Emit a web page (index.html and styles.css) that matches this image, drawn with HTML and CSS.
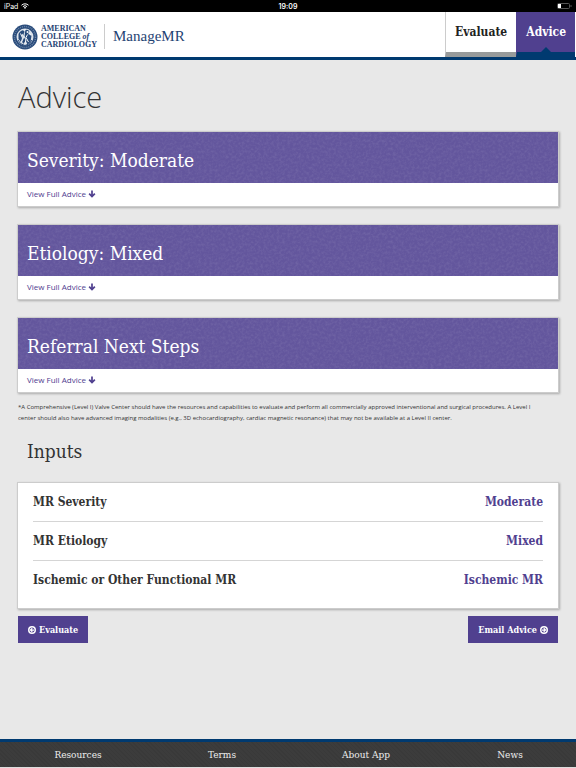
FILE: index.html
```html
<!DOCTYPE html>
<html lang="en">
<head>
    <meta charset="UTF-8">
    <meta name="viewport" content="width=device-width, initial-scale=1.0">
    <title>ManageMR</title>
    <link rel="stylesheet" href="styles.css">
</head>
<body>
    <div class="status-bar">
        <span class="device">iPad
            <svg class="wifi" viewBox="0 0 16 12" aria-hidden="true">
                <path d="M1 4.5a10 10 0 0 1 14 0M3.8 7.3a6 6 0 0 1 8.4 0" fill="none" stroke="#fff" stroke-width="2"/>
                <path d="M5.5 9.2a3.6 3.6 0 0 1 5 0L8 12z" fill="#fff"/>
            </svg>
        </span>
        <span class="time">19:09</span>
        <svg class="battery" viewBox="0 0 15 6" aria-hidden="true">
            <rect x=".5" y=".5" width="12" height="5" rx="1" fill="none" stroke="#555"/>
            <rect x="1" y="1" width="3" height="4" fill="#fff"/>
            <path d="M14 2v2" stroke="#555"/>
        </svg>
    </div>

    <header class="header">
        <a class="brand" href="#">
            <svg class="seal" viewBox="0 0 52 52" aria-hidden="true">
                <circle cx="26" cy="26" r="25" fill="#284a7a"/>
                <circle cx="26" cy="26" r="21" fill="none" stroke="#6c86a8" stroke-width="3" stroke-dasharray="2 2"/>
                <circle cx="26" cy="26" r="17" fill="#dbe2ea"/>
                <path d="M13 20q4-8 9-7l2 4-5 5 3 6-4 8-5-6zM27 12q6-2 8 4l-3 4 7 3-2 13-6 5-4-9-3 8-4-4 5-10-3-6z" fill="#284a7a"/>
                <path d="M26 10l-2 14 4 8-3 9M17 19l4 9-2 8M31 21l-3 6 5 9M34 17l4 6" fill="none" stroke="#f4f6f9" stroke-width="2"/>
                <circle cx="22" cy="16" r="3" fill="#284a7a"/>
                <circle cx="31" cy="16" r="2" fill="#f4f6f9"/>
                <path d="M12 32q3 9 14 11 11-2 14-11" fill="none" stroke="#284a7a" stroke-width="2"/>
            </svg>
            <span class="college">AMERICAN<br>COLLEGE <i>of</i><br>CARDIOLOGY</span>
            <span class="app-name">ManageMR</span>
        </a>
        <nav class="tabs">
            <a class="tab" href="#">Evaluate</a>
            <a class="tab active" href="#" aria-current="page">Advice</a>
        </nav>
    </header>

    <main class="content">
        <h1>Advice</h1>

        <section class="card">
            <h2>Severity: Moderate</h2>
            <a class="view-link" href="#">View Full Advice
                <svg class="arrow" viewBox="0 0 14 14" aria-hidden="true"><path d="M7 1v10M2 6.5l5 5 5-5" fill="none" stroke="currentColor" stroke-width="3"/></svg>
            </a>
        </section>

        <section class="card">
            <h2>Etiology: Mixed</h2>
            <a class="view-link" href="#">View Full Advice
                <svg class="arrow" viewBox="0 0 14 14" aria-hidden="true"><path d="M7 1v10M2 6.5l5 5 5-5" fill="none" stroke="currentColor" stroke-width="3"/></svg>
            </a>
        </section>

        <section class="card">
            <h2>Referral Next Steps</h2>
            <a class="view-link" href="#">View Full Advice
                <svg class="arrow" viewBox="0 0 14 14" aria-hidden="true"><path d="M7 1v10M2 6.5l5 5 5-5" fill="none" stroke="currentColor" stroke-width="3"/></svg>
            </a>
        </section>

        <p class="footnote">*A Comprehensive (Level I) Valve Center should have the resources and capabilities to evaluate and perform all commercially approved interventional and surgical procedures. A Level I center should also have advanced imaging modalities (e.g., 3D echocardiography, cardiac magnetic resonance) that may not be available at a Level II center.</p>

        <h2 class="inputs-title">Inputs</h2>
        <dl class="inputs">
            <div class="input-row">
                <dt>MR Severity</dt>
                <dd>Moderate</dd>
            </div>
            <div class="input-row">
                <dt>MR Etiology</dt>
                <dd>Mixed</dd>
            </div>
            <div class="input-row">
                <dt>Ischemic or Other Functional MR</dt>
                <dd>Ischemic MR</dd>
            </div>
        </dl>

        <div class="actions">
            <button type="button">
                <svg class="circle-arrow" viewBox="0 0 16 16" aria-hidden="true"><circle cx="8" cy="8" r="6.5" fill="none" stroke="#fff" stroke-width="3"/><path d="M12 8H5M8.5 4.5L5 8l3.5 3.5" fill="none" stroke="#fff" stroke-width="2.5"/></svg>
                Evaluate
            </button>
            <button type="button">
                Email Advice
                <svg class="circle-arrow" viewBox="0 0 16 16" aria-hidden="true"><circle cx="8" cy="8" r="6.5" fill="none" stroke="#fff" stroke-width="3"/><path d="M4 8h7M7.5 4.5L11 8l-3.5 3.5" fill="none" stroke="#fff" stroke-width="2.5"/></svg>
            </button>
        </div>
    </main>

    <footer class="footer">
        <a href="#">Resources</a>
        <a href="#">Terms</a>
        <a href="#">About App</a>
        <a href="#">News</a>
    </footer>
</body>
</html>
```
FILE: styles.css
```css
* {
    box-sizing: border-box;
}

body {
    margin: 0;
    min-height: 100vh;
    display: flex;
    flex-direction: column;
    font-family: "Open Sans", sans-serif;
    color: #333;
    background-color: #e8e8e8;
}

a {
    text-decoration: none;
}

h1, h2, p, dl, dd {
    margin: 0;
}

.status-bar {
    display: grid;
    grid-template-columns: 1fr auto 1fr;
    align-items: center;
    height: 12px;
    padding: 0 4px;
    font-family: Inter, sans-serif;
    font-size: 7px;
    color: #fff;
    background-color: #000;
}

.device {
    display: flex;
    align-items: center;
    gap: 3px;
}

.wifi {
    width: 8px;
    height: 6px;
}

.time {
    font-weight: 600;
}

.battery {
    width: 15px;
    height: 6px;
    justify-self: end;
}

.header {
    display: flex;
    justify-content: space-between;
    height: 48px;
    padding-right: 1px;
    background-color: #fff;
    border-bottom: 3px solid #003a70;
}

.brand {
    display: flex;
    align-items: center;
    padding-left: 12px;
    padding-top: 4px;
    font-family: "Liberation Serif", serif;
    color: #1f4373;
}

.seal {
    width: 26px;
    height: 26px;
    margin-right: 3px;
}

.college {
    font-size: 8px;
    line-height: 8px;
    font-weight: bold;
}

.app-name {
    margin-left: 7px;
    padding-left: 8px;
    border-left: 1px solid #ccc;
    font-size: 15px;
    line-height: 25px;
}

.tabs {
    display: flex;
    font-family: "Roboto Slab", "DejaVu Serif Condensed", "DejaVu Serif", serif;
    font-size: 12px;
    font-weight: bold;
}

.tab {
    display: flex;
    align-items: center;
    padding: 0 9px;
    color: #222;
    background-color: #fff;
    border-left: 1px solid #ccc;
    border-bottom: 5px solid #989b9b;
}

.tab.active {
    position: relative;
    color: #fff;
    background-color: #50408f;
    border-left-color: #50408f;
    border-bottom-color: #003a70;
}

.tab.active::after {
    content: "";
    position: absolute;
    bottom: 0;
    left: 50%;
    margin-left: -5px;
    border: 5px solid transparent;
    border-top-width: 0;
    border-bottom-color: #003a70;
}

.content {
    flex: 1;
    padding: 17px 18px 24px;
}

h1 {
    font-size: 29px;
    line-height: 40px;
    font-weight: 300;
    margin-bottom: 15px;
}

.card, .inputs {
    background-color: #fff;
    box-shadow: 0 0 0 1px #ccc, 1px 1px 2px 1px #aaa;
}

.card {
    margin-bottom: 19px;
}

.card h2, .inputs-title {
    font-family: "Roboto Slab", "DejaVu Serif Condensed", "DejaVu Serif", serif;
    font-size: 19px;
    line-height: 26px;
    font-weight: normal;
}

.card h2 {
    padding: 15px 9px 10px;
    color: #fff;
    background-color: #63569d;
    background-image: url("data:image/svg+xml,%3Csvg xmlns='http://www.w3.org/2000/svg' width='270' height='51'%3E%3Cfilter id='n' x='0' y='0' width='100%25' height='100%25'%3E%3CfeTurbulence type='fractalNoise' baseFrequency='.37' numOctaves='3' stitchTiles='stitch'/%3E%3CfeColorMatrix values='0 0 0 0 1 0 0 0 0 1 0 0 0 0 1 1 0 0 0 -.4'/%3E%3C/filter%3E%3Crect width='270' height='51' filter='url(%23n)' opacity='.16'/%3E%3C/svg%3E");
}

.view-link {
    display: flex;
    align-items: center;
    gap: 2px;
    height: 23px;
    padding: 0 9px 2px;
    font-size: 8px;
    color: #50408f;
}

.arrow {
    width: 8px;
    height: 8px;
}

.footnote {
    margin-top: -9px;
    padding-right: 9px;
    font-size: 6px;
    line-height: 11px;
}

.inputs-title {
    margin: 14px 9px 19px;
}

.inputs {
    padding: 0 15px 9px;
    font-family: "Roboto Slab", "DejaVu Serif Condensed", "DejaVu Serif", serif;
    font-size: 12px;
    line-height: 38px;
    font-weight: bold;
}

.input-row {
    display: flex;
    justify-content: space-between;
    border-bottom: 1px solid #d5d5d5;
}

.input-row:last-child {
    border-bottom: 0;
}

.input-row dd {
    color: #50408f;
}

.actions {
    display: flex;
    justify-content: space-between;
    margin-top: 8px;
}

.actions button {
    display: flex;
    align-items: center;
    gap: 3px;
    height: 27px;
    padding: 0 10px;
    border: 0;
    font-family: "Roboto Slab", "DejaVu Serif Condensed", "DejaVu Serif", serif;
    font-size: 9px;
    font-weight: bold;
    color: #fff;
    background-color: #50408f;
    cursor: pointer;
}

.circle-arrow {
    width: 8px;
    height: 8px;
}

.footer {
    display: grid;
    grid-template-columns: repeat(4, 1fr);
    border-top: 3px solid #003a70;
    border-bottom: 1px solid #ddd;
    background: repeating-linear-gradient(45deg, #393939 0 1px, #3c3c3c 1px 3px);
}

.footer a {
    padding-left: 12px;
    font-family: "Roboto Slab", "DejaVu Serif Condensed", "DejaVu Serif", serif;
    font-size: 10px;
    line-height: 25px;
    text-align: center;
    color: #eee;
}
```
